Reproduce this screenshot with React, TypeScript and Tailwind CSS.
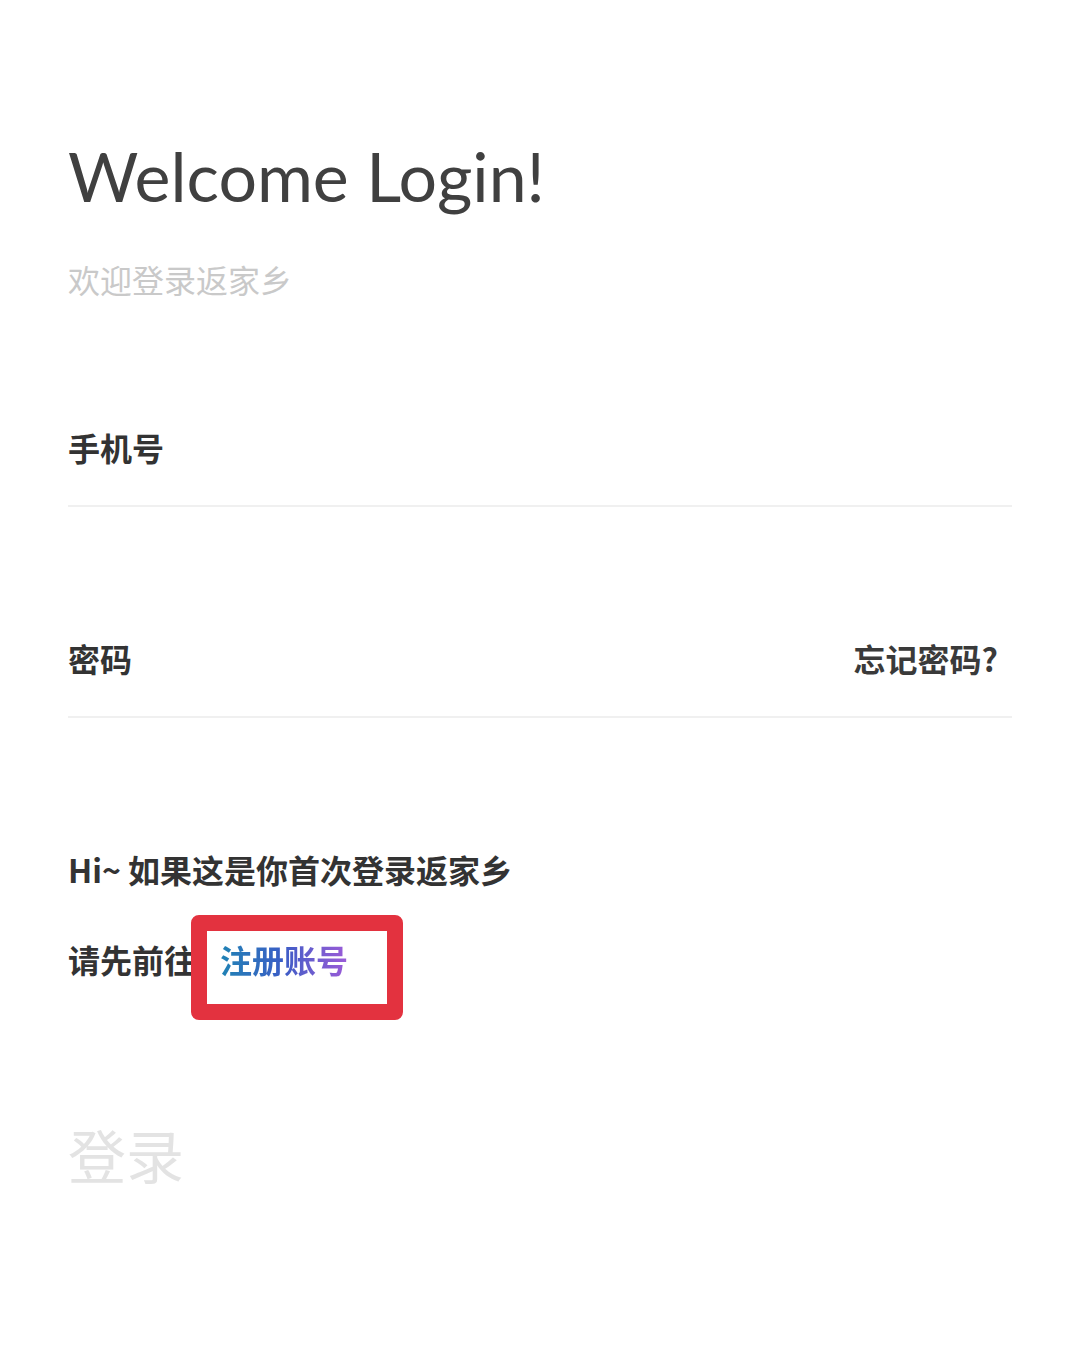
const cjk = "font-['Noto_Sans_CJK_SC',sans-serif]";

function Field({ label, extra }: { label: string; extra?: string }) {
  return (
    <div className="flex items-center justify-between border-b-2 border-[#f0f0f0] pb-[38px]">
      <span className={`${cjk} text-[32px] leading-[40px] font-bold text-[#333]`}>{label}</span>
      {extra && (
        <span className={`${cjk} mr-[14px] text-[32px] leading-[40px] font-bold text-[#3a3a3a]`}>{extra}</span>
      )}
    </div>
  );
}

export default function App() {
  return (
    <div className="min-h-[1348px] bg-white px-[68px]">
      <h1 className="pt-[135px] font-['Lato',sans-serif] text-[68px] leading-[82px] font-normal text-[#404040]">
        Welcome Login!
      </h1>
      <p className={`${cjk} mt-[42px] text-[32px] leading-[40px] text-[#c9c9c9]`}>欢迎登录返家乡</p>

      <div className="mt-[128px]">
        <Field label="手机号" />
      </div>
      <div className="mt-[131px]">
        <Field label="密码" extra="忘记密码?" />
      </div>

      <p className={`${cjk} mt-[131px] text-[32px] leading-[40px] font-bold text-[#333]`}>Hi~ 如果这是你首次登录返家乡</p>
      <div className={`${cjk} mt-[50px] flex text-[32px] leading-[40px] font-bold`}>
        <span className="text-[#333]">请先前往</span>
        <span className="relative ml-[24px]">
          <span className="bg-gradient-to-r from-[#1e82b4] via-[#3a5cc6] to-[#9b5ad8] bg-clip-text text-transparent">
            注册账号
          </span>
          <span className="absolute -top-[24px] -bottom-[41px] -left-[29px] -right-[55px] rounded-[8px] border-[16px] border-[#e3323f]" />
        </span>
      </div>

      <p className={`${cjk} mt-[140px] text-[58px] leading-[70px] text-[#e3e3e3]`}>登录</p>
    </div>
  );
}
